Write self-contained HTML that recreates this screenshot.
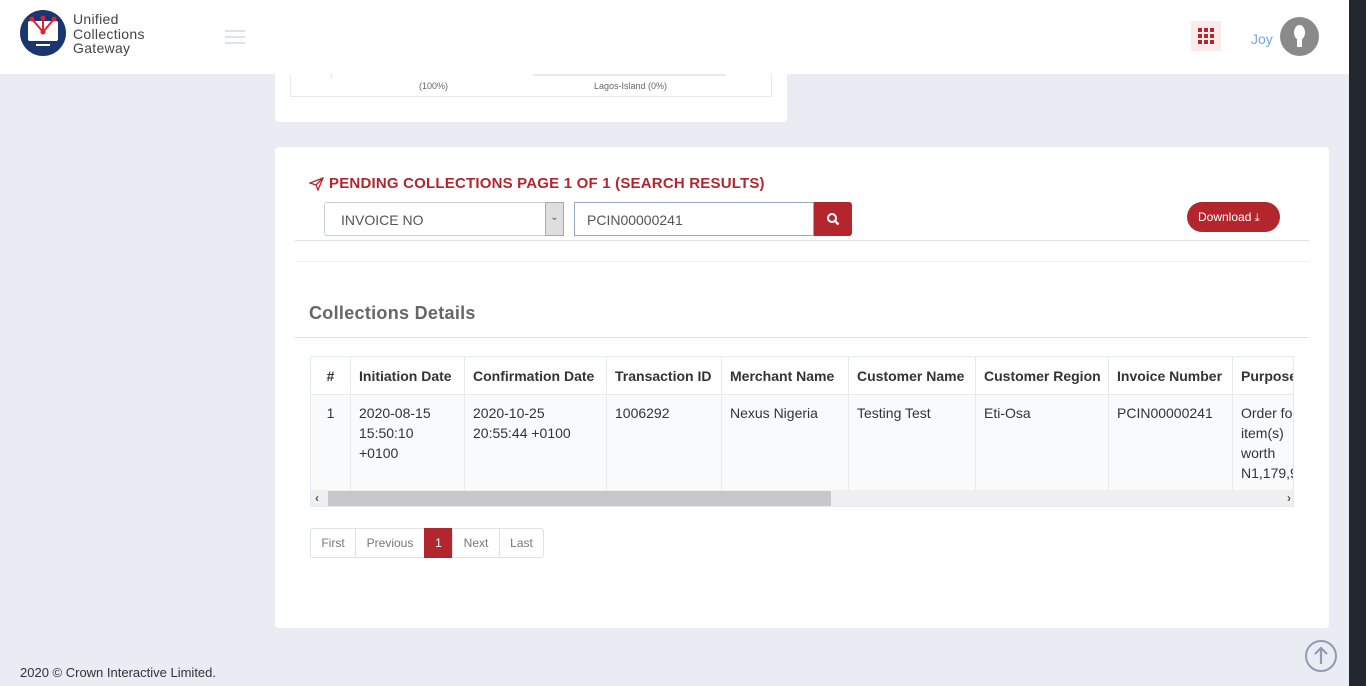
<!DOCTYPE html>
<html><head><meta charset="utf-8"><style>
*{box-sizing:border-box;margin:0;padding:0}
body{width:1366px;height:686px;overflow:hidden;background:#e9ecf3;font-family:"Liberation Sans",sans-serif;position:relative;color:#444}
.hdr{position:absolute;left:0;top:0;width:1349px;height:74px;background:#fff}
.sb{position:absolute;left:1349px;top:0;width:17px;height:686px;background:#22272e}
.card{position:absolute;background:#fff;border-radius:4px}
table{border-collapse:collapse;font-size:14px;table-layout:fixed}
td,th{border:1px solid #e6e9ee;padding:8px 8px;text-align:left;vertical-align:top;color:#333;white-space:nowrap;overflow:hidden;line-height:20px}
th{font-weight:bold;height:37px;padding-top:9px}
tbody td{background:#f9fafc;height:96px}
.pg{position:absolute;top:528px;height:30px;border:1px solid #dee2e6;font-size:12px;color:#777;line-height:28px;text-align:center}
</style></head><body>
<div class="hdr">
 <svg style="position:absolute;left:20px;top:10px" width="46" height="46" viewBox="0 0 46 46"><circle cx="23" cy="23" r="23" fill="#1a3570"/><rect x="8" y="11" width="30" height="20" rx="2" fill="#fff"/><rect x="16" y="34" width="14" height="2" fill="#fff"/><path d="M12 9 L23 22 L34 9 M23 8 L23 22" stroke="#e5202e" stroke-width="2" fill="none"/><circle cx="12" cy="9" r="2.5" fill="#e5202e"/><circle cx="23" cy="8" r="2.5" fill="#e5202e"/><circle cx="34" cy="9" r="2.5" fill="#e5202e"/><circle cx="23" cy="22" r="2.5" fill="#e5202e"/></svg>
 <div style="position:absolute;left:73px;top:12px;font-size:14px;line-height:14.5px;color:#444;letter-spacing:0.3px">Unified<br>Collections<br>Gateway</div>
 <div style="position:absolute;left:225px;top:30px;width:20px;height:2px;background:#dde2ea;box-shadow:0 6px 0 #dde2ea,0 12px 0 #dde2ea"></div>
 <div style="position:absolute;left:1191px;top:21px;width:30px;height:30px;background:#fbeaea"><div style="position:absolute;left:7px;top:7px;width:4px;height:4px;background:#b3262e;box-shadow:6px 0 #b3262e,12px 0 #b3262e,0 6px #b3262e,6px 6px #b3262e,12px 6px #b3262e,0 12px #b3262e,6px 12px #b3262e,12px 12px #b3262e"></div></div>
 <div style="position:absolute;left:1251px;top:31px;font-size:14px;color:#6fa8dc">Joy</div>
 <div style="position:absolute;left:1280px;top:17px;width:39px;height:39px;border-radius:50%;background:#8a8a8a"><div style="position:absolute;left:14px;top:8px;width:11px;height:15px;border-radius:50%;background:#fff"></div><div style="position:absolute;left:17px;top:20px;width:5px;height:10px;background:#fff"></div></div>
</div>
<div class="sb"></div>
<div class="card" style="left:275px;top:60px;width:512px;height:62px;border-radius:0 0 4px 4px">
 <div style="position:absolute;left:15px;top:14px;width:482px;height:23px;border:1px solid #e6e9ee;border-top:none"></div>
 <div style="position:absolute;left:56px;top:14px;width:1px;height:5px;background:#e6e9ee"></div>
 <div style="position:absolute;left:258px;top:14px;width:193px;height:2px;background:#e6e9ee"></div>
 <div style="position:absolute;left:144px;top:21px;font-size:9px;color:#666">(100%)</div>
 <div style="position:absolute;left:319px;top:21px;font-size:9px;color:#666">Lagos-Island (0%)</div>
</div>
<div class="card" style="left:275px;top:147px;width:1054px;height:481px">
 <svg style="position:absolute;left:34px;top:30px" width="15" height="14" viewBox="0 0 15 14"><path d="M1 6 L14 1 L9 13 L7 8 Z M7 8 L14 1" stroke="#b3262e" stroke-width="1.3" fill="none"/></svg>
 <div style="position:absolute;left:54px;top:28px;font-size:15px;font-weight:bold;color:#b3262e;letter-spacing:0.2px">PENDING COLLECTIONS PAGE 1 OF 1 (SEARCH RESULTS)</div>
 <div style="position:absolute;left:49px;top:55px;width:240px;height:34px;border:1px solid #c8ced8;border-radius:3px;font-size:14px;padding:9px 16px;color:#555">INVOICE NO</div>
 <div style="position:absolute;left:270px;top:55px;width:19px;height:34px;background:#dedede;border:1px solid #aaa;font-size:10px;text-align:center;line-height:30px;color:#555">⌄</div>
 <div style="position:absolute;left:299px;top:55px;width:240px;height:34px;border:1px solid #9aa6bd;font-size:14px;padding:9px 12px;color:#555">PCIN00000241</div>
 <div style="position:absolute;left:539px;top:55px;width:38px;height:34px;background:#b3262e;border-radius:0 3px 3px 0"><svg style="position:absolute;left:12px;top:10px" width="14" height="14" viewBox="0 0 14 14"><circle cx="6" cy="6" r="4" stroke="#fff" stroke-width="2" fill="none"/><path d="M9 9 L12.5 12.5" stroke="#fff" stroke-width="2.4"/></svg></div>
 <div style="position:absolute;left:912px;top:55px;width:93px;height:30px;background:#b3262e;border-radius:15px;color:#fff;font-size:12px;line-height:30px;padding-left:11px">Download <span style="font-size:11px">⤓</span></div>
 <div style="position:absolute;left:20px;top:93px;width:1014px;height:1px;background:#dee2e6"></div>
 <div style="position:absolute;left:20px;top:114px;width:1014px;height:1px;background:#eceff3"></div>
 <div style="position:absolute;left:34px;top:156px;font-size:18px;font-weight:bold;color:#666;letter-spacing:0.3px">Collections Details</div>
 <div style="position:absolute;left:20px;top:190px;width:1014px;height:1px;background:#dee2e6"></div>
 <div style="position:absolute;left:35px;top:209px;width:984px;height:151px;overflow:hidden;border:1px solid #e6e9ee">
 <table style="width:1040px;margin:-1px 0 0 -1px">
  <colgroup><col style="width:40px"><col style="width:114px"><col style="width:142px"><col style="width:115px"><col style="width:127px"><col style="width:127px"><col style="width:133px"><col style="width:124px"><col style="width:118px"></colgroup>
  <thead><tr><th style="text-align:center">#</th><th>Initiation Date</th><th>Confirmation Date</th><th>Transaction ID</th><th>Merchant Name</th><th>Customer Name</th><th>Customer Region</th><th>Invoice Number</th><th>Purpose</th></tr></thead>
  <tbody><tr><td style="text-align:center">1</td><td style="white-space:normal">2020-08-15<br>15:50:10<br>+0100</td><td>2020-10-25<br>20:55:44 +0100</td><td>1006292</td><td>Nexus Nigeria</td><td>Testing Test</td><td>Eti-Osa</td><td>PCIN00000241</td><td>Order for<br>item(s)<br>worth<br>N1,179,9</td></tr></tbody>
 </table>
 <div style="position:absolute;left:0;top:133px;width:984px;height:17px;background:#f0f0f0"><div style="position:absolute;left:17px;top:1px;width:503px;height:15px;background:#c8c8c8"></div><span style="position:absolute;left:4px;top:1px;font-size:12px;font-weight:bold;color:#555">‹</span><span style="position:absolute;right:4px;top:1px;font-size:12px;font-weight:bold;color:#555">›</span></div>
 </div>
</div>
<div class="pg" style="left:310px;width:46px;border-radius:3px 0 0 3px">First</div>
<div class="pg" style="left:355px;width:70px">Previous</div>
<div class="pg" style="left:424px;width:29px;background:#b3262e;border-color:#b3262e;color:#fff">1</div>
<div class="pg" style="left:452px;width:48px">Next</div>
<div class="pg" style="left:499px;width:45px;border-radius:0 3px 3px 0">Last</div>
<div style="position:absolute;left:20px;top:665px;font-size:13px;color:#333">2020 © Crown Interactive Limited.</div>
<svg style="position:absolute;left:1304px;top:639px" width="34" height="34" viewBox="0 0 34 34"><circle cx="17" cy="17" r="15" stroke="#8f9bb3" stroke-width="2" fill="none"/><path d="M17 25 L17 10 M11 15 L17 9 L23 15" stroke="#8f9bb3" stroke-width="2.2" fill="none"/></svg>
</body></html>
